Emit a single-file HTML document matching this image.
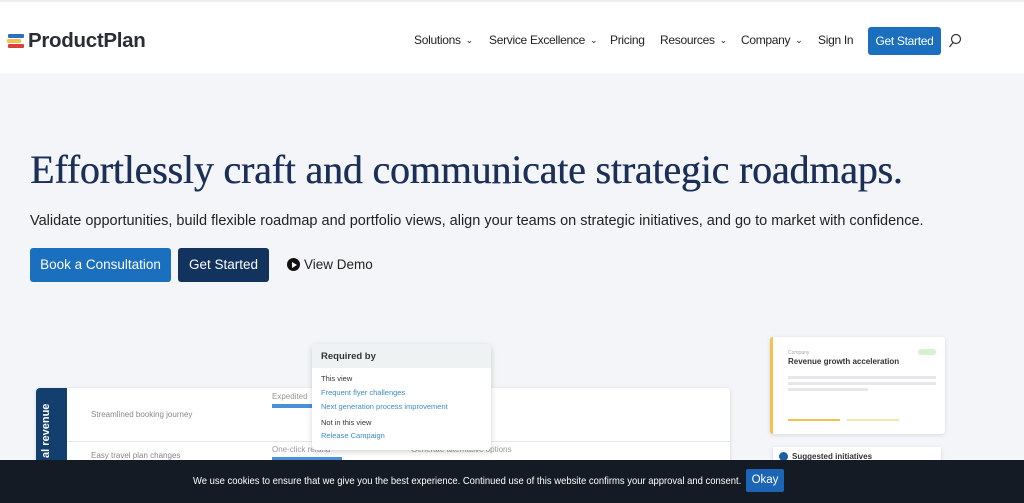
<!DOCTYPE html>
<html><head><meta charset="utf-8"><style>
*{margin:0;padding:0;box-sizing:border-box}
body{width:1024px;height:503px;overflow:hidden;background:#f3f5f8;font-family:"Liberation Sans",sans-serif;position:relative}
.hdr{position:absolute;left:0;top:0;width:1024px;height:73px;background:#fff;border-top:2px solid #eee}
.logo{position:absolute;left:8px;top:27px;font-size:20.5px;font-weight:bold;color:#2a2d35;letter-spacing:-0.3px}
.logo span{position:absolute;left:0;height:4px;border-radius:1px}
.nav{position:absolute;top:31px;font-size:12px;color:#222;letter-spacing:-0.3px;white-space:nowrap}
.nav i{font-style:normal;font-size:9px;margin-left:5px;position:relative;top:-1px}
.gs{position:absolute;left:868px;top:25px;width:73px;height:28px;background:#1a6fbe;color:#fff;font-size:12px;letter-spacing:-0.3px;border-radius:3px;text-align:center;line-height:28px}
h1{position:absolute;left:30px;top:146px;font-family:"Liberation Serif",serif;font-weight:normal;font-size:40px;color:#1b2f57;letter-spacing:-0.2px;white-space:nowrap;text-shadow:0.4px 0 0 #1b2f57}
.sub{position:absolute;left:30px;top:213px;font-size:14.5px;color:#222;white-space:nowrap}
.btn{position:absolute;top:248px;height:34px;line-height:34px;color:#fff;font-size:13.5px;text-align:center;border-radius:3px}
.card{position:absolute;left:36px;top:388px;width:694px;height:90px;background:#fff;border-radius:4px;box-shadow:0 1px 4px rgba(0,0,0,.12)}
.cookie{position:absolute;left:0;top:460px;width:1024px;height:43px;background:#151b24;color:#fff;font-size:10.5px}
</style></head><body>
<div class="hdr">
 <div class="logo"><span style="top:5px;width:16px;background:#2f6fc0"></span><span style="top:10px;width:14px;background:#f2c14e;left:-1px"></span><span style="top:15px;width:16px;background:#d9413c"></span><div style="margin-left:20px">ProductPlan</div></div>
 <div class="nav" style="left:414px">Solutions<i>⌄</i></div>
 <div class="nav" style="left:489px">Service Excellence<i>⌄</i></div>
 <div class="nav" style="left:610px">Pricing</div>
 <div class="nav" style="left:660px">Resources<i>⌄</i></div>
 <div class="nav" style="left:741px">Company<i>⌄</i></div>
 <div class="nav" style="left:818px">Sign In</div>
 <div class="gs">Get Started</div>
 <svg style="position:absolute;left:948px;top:31px" width="14" height="16"><circle cx="8" cy="6" r="4.5" fill="none" stroke="#333" stroke-width="1.2"/><line x1="5" y1="9.5" x2="1.5" y2="14" stroke="#333" stroke-width="1.2"/></svg>
</div>
<h1>Effortlessly craft and communicate strategic roadmaps.</h1>
<div class="sub">Validate opportunities, build flexible roadmap and portfolio views, align your teams on strategic initiatives, and go to market with confidence.</div>
<div class="btn" style="left:30px;width:141px;background:#1a70be">Book a Consultation</div>
<div class="btn" style="left:178px;width:91px;background:#12335d">Get Started</div>
<div style="position:absolute;left:287px;top:258px;width:13px;height:13px;border-radius:50%;background:#111"><div style="position:absolute;left:5px;top:3.5px;border-left:5px solid #fff;border-top:3px solid transparent;border-bottom:3px solid transparent"></div></div>
<div style="position:absolute;left:304px;top:257px;font-size:13.5px;color:#222">View Demo</div>

<div class="card">
 <div style="position:absolute;left:0;top:0;width:31px;height:90px;background:#123f6e;border-radius:4px 0 0 4px"></div>
 <div style="position:absolute;left:4px;top:70px;transform:rotate(-90deg);transform-origin:left top;color:#fff;font-weight:bold;font-size:11px;white-space:nowrap">al revenue</div>
 <div style="position:absolute;left:31px;top:53px;width:663px;height:1px;background:#e6e8eb"></div>
 <div style="position:absolute;left:55px;top:22px;font-size:8px;color:#888">Streamlined booking journey</div>
 <div style="position:absolute;left:55px;top:63px;font-size:8px;color:#888">Easy travel plan changes</div>
 <div style="position:absolute;left:236px;top:4px;font-size:8px;color:#999">Expedited</div>
 <div style="position:absolute;left:236px;top:16px;width:40px;height:4px;background:#4a90d9"></div>
 <div style="position:absolute;left:236px;top:57px;font-size:8px;color:#999">One-click refund</div>
 <div style="position:absolute;left:236px;top:69px;width:70px;height:4px;background:#4a90d9"></div>
 <div style="position:absolute;left:375px;top:57px;font-size:8px;color:#999">Generate alternative options</div>
</div>
<div style="position:absolute;left:312px;top:344px;width:179px;height:106px;background:#fff;border-radius:4px;box-shadow:0 2px 6px rgba(0,0,0,.18);font-size:7.5px">
 <div style="height:24px;background:#eef2f3;border-radius:4px 4px 0 0;padding:7px 0 0 9px;font-weight:bold;font-size:9.5px;color:#333">Required by</div>
 <div style="position:absolute;left:9px;top:30px;color:#333">This view</div>
 <div style="position:absolute;left:9px;top:44px;color:#3a8ec4">Frequent flyer challenges</div>
 <div style="position:absolute;left:9px;top:58px;color:#3a8ec4">Next generation process improvement</div>
 <div style="position:absolute;left:9px;top:74px;color:#333">Not in this view</div>
 <div style="position:absolute;left:9px;top:87px;color:#3a8ec4">Release Campaign</div>
</div>
<div style="position:absolute;left:770px;top:337px;width:175px;height:97px;background:#fff;border-left:3px solid #f2c14e;border-radius:3px;box-shadow:0 1px 4px rgba(0,0,0,.12)">
 <div style="position:absolute;left:15px;top:13px;font-size:5px;color:#aaa">Company</div>
 <div style="position:absolute;left:145px;top:12px;width:18px;height:6px;background:#d8f0d0;border-radius:3px"></div>
 <div style="position:absolute;left:15px;top:20px;font-size:8px;font-weight:bold;color:#333">Revenue growth acceleration</div>
 <div style="position:absolute;left:15px;top:39px;width:148px;height:3px;background:#e5e7ea"></div>
 <div style="position:absolute;left:15px;top:45px;width:148px;height:3px;background:#e5e7ea"></div>
 <div style="position:absolute;left:15px;top:51px;width:80px;height:3px;background:#e5e7ea"></div>
 <div style="position:absolute;left:15px;top:82px;width:52px;height:2px;background:#f2c14e"></div>
 <div style="position:absolute;left:74px;top:82px;width:52px;height:2px;background:#f5e3b0"></div>
</div>
<div style="position:absolute;left:773px;top:447px;width:168px;height:20px;background:#fff;box-shadow:0 1px 4px rgba(0,0,0,.12)">
 <div style="position:absolute;left:6px;top:5px;width:9px;height:9px;border-radius:50%;background:#1a5fa8"></div>
 <div style="position:absolute;left:19px;top:5px;font-size:8px;font-weight:bold;color:#333">Suggested initiatives</div>
</div>
<div class="cookie">
 <div style="position:absolute;left:193px;top:15px;white-space:nowrap;transform:scaleX(0.9);transform-origin:left top">We use cookies to ensure that we give you the best experience. Continued use of this website confirms your approval and consent.</div>
 <div style="position:absolute;left:746px;top:9px;width:38px;height:23px;background:#1c64b5;border-radius:2px;text-align:center;line-height:23px;font-size:11.5px">Okay</div>
</div>
</body></html>
